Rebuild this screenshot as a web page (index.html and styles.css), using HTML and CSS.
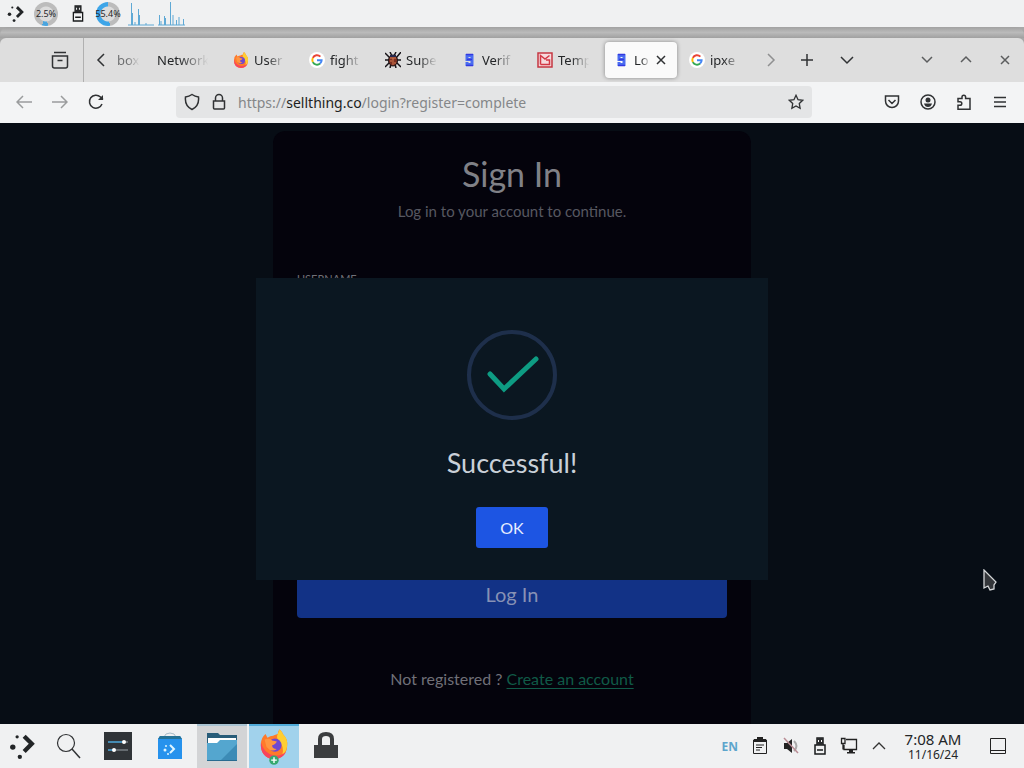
FILE: index.html
```
<!DOCTYPE html>
<html lang="en">
<head>
<meta charset="UTF-8" />
<meta name="viewport" content="width=device-width, initial-scale=1" />
<title>Sign In</title>
<link rel="stylesheet" href="styles.css">
</head>
<body>

<!-- Shared icons -->
<svg class="defs" aria-hidden="true">
  <symbol id="google" viewBox="0 0 18 18">
    <circle cx="9" cy="9" r="9" fill="#fff"/>
    <g fill="none" stroke-width="2.2">
      <path d="M12.8 5.2A5.3 5.3 0 0 0 4.3 6.6" stroke="#ea4335"/>
      <path d="M4.3 6.6a5.3 5.3 0 0 0 0 4.8" stroke="#fbbc05"/>
      <path d="M4.3 11.4a5.3 5.3 0 0 0 8.2 1.6" stroke="#34a853"/>
      <path d="M12.5 13A5.3 5.3 0 0 0 14.2 9.2H9" stroke="#4285f4"/>
    </g>
  </symbol>
  <symbol id="sell" viewBox="0 0 16 16">
    <path d="M11 6V3.500H6V7.500h5V12.500H6V10" fill="none" stroke="#4a6cf0" stroke-width="3"/>
    <path d="M5 2.500h7M5 13.500h7M6 7.500h5" stroke="#3338e0" stroke-width="1.500"/>
  </symbol>
  <symbol id="fox" viewBox="0 0 32 32">
    <path d="M2 16Q2 9 7 5l2 4q3-2 6-2 1-1 5-2 0-3 2-5 3 3 4 6 5 5 4 12a14 14 0 0 1-28 0Z" fill="#ff7a2a"/>
    <path d="M22 0q3 3 4 6 5 4 4 12-1 7-5 9 2-9-4-15-3-3-1-7Z" fill="#ffce32"/>
    <path d="M2 14q-1 17 14 18 9 0 13-8-6 5-13 4Q5 26 2 14Z" fill="#f8455d"/>
    <circle cx="17" cy="17" r="7" fill="#7048d0"/>
    <path d="M6 11q6-2 8 1l5 1q-1 3-5 4 0 4 5 4-6 4-11-2Z" fill="#ff9640"/>
  </symbol>
  <symbol id="kde" viewBox="0 0 24 24">
    <path d="m14 3 7 7-7 7" fill="none" stroke="#222527" stroke-width="4"/>
    <circle cx="7.500" cy="3.500" r="1.500" fill="#222527"/>
    <circle cx="3.500" cy="13" r="2.500" fill="#222527"/>
    <circle cx="10" cy="22" r="2" fill="#222527"/>
  </symbol>
  <symbol id="usb" viewBox="0 0 12 18">
    <path d="M3 1h6v7H3ZM1 8h10v9H1Z" fill="none" stroke="#191b1d" stroke-width="1.500"/>
    <path d="M3 1h6v7H3Z" fill="#292b2d"/>
    <path d="M4 3h1v2H4Zm3 0h1v2H7Z" fill="#fff"/>
    <path d="M3 13h6" stroke="#191b1d" stroke-width="1.500"/>
  </symbol>
</svg>

<header class="panel">
  <svg class="panel-kde" viewBox="0 0 24 24"><use href="#kde"/></svg>
  <div class="meter meter-cpu"><span>2.5%</span></div>
  <svg class="panel-usb" viewBox="0 0 12 18"><use href="#usb"/></svg>
  <div class="meter meter-mem"><span>55.4%</span></div>
  <svg class="graph" viewBox="0 0 58 25">
    <path d="M1 24h26M31 24h27M4.500 24V2M5.500 24V12M8 24v-3M11.500 24V8M12.500 24V14M19 24v-2M32.500 24V14M34 24v-4M37.500 24V15M38.500 24v-7M43.500 24V1M46 24V14M49.500 24V19M52 24V16M56.500 24V18" fill="none" stroke="#5fa9d5"/>
  </svg>
</header>

<main class="browser">
  <div class="titlebar"></div>
  <div class="tabbar">
    <button class="tool view-btn" aria-label="Firefox View">
      <svg width="18" height="18" viewBox="0 0 18 18"><path d="M3 1.500h12M1.500 5h15v10q0 2-2 2h-11q-2 0-2-2Z M6.500 9.500h5"/></svg>
    </button>
    <button class="tool scroll-btn" aria-label="Scroll left">
      <svg width="12" height="16" viewBox="0 0 12 16"><path d="m9 2-6 6 6 6"/></svg>
    </button>
    <nav class="tabs">
      <button class="tab tab-cut"><span>box</span></button>
      <button class="tab"><span>Network</span></button>
      <button class="tab"><svg class="fav" viewBox="0 0 32 32"><use href="#fox"/></svg><span>User</span></button>
      <button class="tab"><svg class="fav" viewBox="0 0 18 18"><use href="#google"/></svg><span>fight</span></button>
      <button class="tab">
        <svg class="fav" viewBox="0 0 16 16">
          <path d="m0 1 5 5M16 0l-5 6M0 15l5-5m11 5-5-5M0 8h16M5 0l2 4M11 0 9 4M5 16l1-4m5 4-1-4" stroke="#171318" stroke-width="1.500"/>
          <ellipse cx="8" cy="8.500" rx="4.500" ry="5.500" fill="#7c3022" stroke="#171318"/>
          <path d="M5 6h6M8 6v7M5 9h2m2 2h2" stroke="#d67a51"/>
          <path d="M5 4h6" stroke="#24284d" stroke-width="2"/>
        </svg><span>Supe</span></button>
      <button class="tab"><svg class="fav" viewBox="0 0 16 16"><use href="#sell"/></svg><span>Verif</span></button>
      <button class="tab">
        <svg class="fav" viewBox="0 0 16 16"><path d="M1 1h14v14H1Z" fill="#f6dadd" stroke="#c53742" stroke-width="1.500"/><path d="M3.500 12.500v-9L8 7l4.500-3.500M3.500 12.500h9V8H9" fill="none" stroke="#d33744" stroke-width="1.500"/></svg><span>Temp</span></button>
      <button class="tab active"><svg class="fav" viewBox="0 0 16 16"><use href="#sell"/></svg><span>Lo</span>
        <svg class="close" width="10" height="10" viewBox="0 0 10 10"><path d="m1 1 8 8M9 1 1 9"/></svg></button>
      <button class="tab"><svg class="fav" viewBox="0 0 18 18"><use href="#google"/></svg><span>ipxe</span></button>
    </nav>
    <button class="tool faded scroll-right" aria-label="Scroll right">
      <svg width="12" height="16" viewBox="0 0 12 16"><path d="m3 2 6 6-6 6"/></svg>
    </button>
    <button class="tool new-tab" aria-label="New tab">
      <svg width="14" height="14" viewBox="0 0 14 14"><path d="M7 1v12M1 7h12"/></svg>
    </button>
    <button class="tool new-tab" aria-label="List all tabs">
      <svg width="14" height="14" viewBox="0 0 14 14"><path d="m1 4 6 6 6-6"/></svg>
    </button>
    <div class="window-btns">
      <button class="tool" aria-label="Minimize"><svg width="12" height="12" viewBox="0 0 12 12"><path d="m1 3 5 5 5-5"/></svg></button>
      <button class="tool" aria-label="Maximize"><svg width="12" height="12" viewBox="0 0 12 12"><path d="m1 8 5-5 5 5"/></svg></button>
      <button class="tool" aria-label="Close"><svg width="10" height="10" viewBox="0 0 10 10"><path d="m1 1 8 8M9 1 1 9"/></svg></button>
    </div>
  </div>

  <div class="toolbar">
    <div class="nav-btns">
      <button class="tool faded" aria-label="Back"><svg width="16" height="16" viewBox="0 0 16 16"><path d="M7 2 1 8l6 6M1 8h15"/></svg></button>
      <button class="tool faded" aria-label="Forward"><svg width="16" height="16" viewBox="0 0 16 16"><path d="m9 2 6 6-6 6m6-6H0"/></svg></button>
      <button class="tool" aria-label="Reload"><svg width="16" height="16" viewBox="0 0 16 16"><path d="M14 10a6.500 6.500 0 1 1-1.500-7L15 5.500"/><path class="solid" d="M15 1v5h-5Z"/></svg></button>
    </div>
    <div class="urlbar">
      <svg width="16" height="18" viewBox="0 0 16 18"><path d="M8 1.500q3 2 6.500 2.500 1 9-6.500 12.500Q.500 13 1.500 4 5 3.500 8 1.500Z"/></svg>
      <svg width="14" height="18" viewBox="0 0 14 18"><path d="M3.500 8V5a3.500 3.500 0 0 1 7 0v3M1.500 8h11v7q0 1-1 1h-9q-1 0-1-1Z"/></svg>
      <div class="url">https://<b>sellthing.co</b>/login?register=complete</div>
      <button class="star" aria-label="Bookmark"><svg width="16" height="16" viewBox="0 0 18 18"><path d="m9 1.500 2.300 4.900 5.200.7-3.800 3.700.9 5.300L9 13.500l-4.600 2.600.9-5.300-3.800-3.700 5.200-.7Z"/></svg></button>
    </div>
    <div class="actions">
      <button class="tool" aria-label="Pocket"><svg width="16" height="16" viewBox="0 0 16 16"><path d="M1.500 2h13v5a6.500 6.500 0 0 1-13 0ZM4.500 6 8 9.500 11.500 6"/></svg></button>
      <button class="tool" aria-label="Account"><svg width="16" height="16" viewBox="0 0 16 16"><circle cx="8" cy="8" r="7"/><circle class="solid" cx="8" cy="6" r="2.500"/><path class="solid" d="M4 9.500h8q-1 3.500-4 3.500T4 9.500Z"/></svg></button>
      <button class="tool" aria-label="Extensions"><svg width="16" height="16" viewBox="0 0 16 16"><path d="M2 4.500h4V3a1.800 1.800 0 0 1 3.600 0v1.500H14v10.800H2v-4h2a1.800 1.800 0 0 0 0-3.600H2Z"/></svg></button>
      <button class="tool" aria-label="Menu"><svg width="14" height="14" viewBox="0 0 14 14"><path d="M1 2.500h12M1 7h12M1 11.500h12"/></svg></button>
    </div>
  </div>

  <section class="page">
    <form class="card">
      <h1>Sign In</h1>
      <p class="lead">Log in to your account to continue.</p>
      <label for="username">USERNAME</label>
      <input type="text" id="username" />
      <input type="password" id="password" aria-label="Password" />
      <button type="button" class="login-btn">Log In</button>
      <p class="register">Not registered ? <a href="#">Create an account</a></p>
    </form>

    <!-- Success popup -->
    <div class="overlay">
      <div class="modal" role="dialog" aria-labelledby="modalTitle">
        <svg class="check" viewBox="0 0 90 90">
          <circle cx="45" cy="45" r="43" fill="none" stroke="#1e2f4b" stroke-width="4"/>
          <path d="m23 44 14 15 32-30" fill="none" stroke="#0e9c83" stroke-width="5" stroke-linecap="round"/>
        </svg>
        <h2 id="modalTitle">Successful!</h2>
        <button type="button" class="ok-btn">OK</button>
      </div>
    </div>
  </section>
</main>

<footer class="taskbar">
  <div class="launchers">
    <button class="task" aria-label="Menu"><svg width="26" height="26" viewBox="0 0 24 24"><use href="#kde"/></svg></button>
    <button class="task search" aria-label="Search"><svg width="28" height="28" viewBox="0 0 28 28"><circle cx="12" cy="11" r="8.500" fill="none" stroke="#303234" stroke-width="1.200"/><path d="m18 17 8 9" stroke="#303234" stroke-width="1.500"/></svg></button>
    <button class="task" aria-label="Settings"><svg width="28" height="28" viewBox="0 0 28 28"><path d="M0 0h28v28H0Z" fill="#303438"/><path d="M4 10h14M4 18h6" stroke="#4ca8da" stroke-width="1.500"/><path d="M18 10h6M10 18h14" stroke="#777d82" stroke-width="1.500"/><circle cx="20" cy="10" r="2" fill="#fff"/><circle cx="10" cy="18" r="2" fill="#fff"/></svg></button>
    <button class="task" aria-label="Discover"><svg width="28" height="28" viewBox="0 0 28 28"><path d="M8 5q1-4 6-4t6 4" fill="none" stroke="#a8bcc8"/><path d="M4 4h20l2 3v20H2V7Z" fill="#2692ed"/><path d="M4 4h20l2 3H2Z" fill="#267396"/><path d="m14 13 4 4-4 4" fill="none" stroke="#dff5ff" stroke-width="2"/><circle cx="10" cy="14" r="1" fill="#dff5ff"/><circle cx="9" cy="18" r="1.500" fill="#dff5ff"/><circle cx="12" cy="22" r="1" fill="#dff5ff"/></svg></button>
    <button class="task open" aria-label="Files"><svg width="32" height="30" viewBox="0 0 32 30"><path d="M1 1h11l2 2h17v12H1Z" fill="#285c79"/><path d="M2 6h28v8H2Z" fill="#fff"/><path d="M1 11h10l3-3h17v21H1Z" fill="#54a6cf"/><path d="m14 29 17-17v17Z" fill="#3c8bb6"/><path d="M1 28.500h30" stroke="#286b90"/></svg></button>
    <button class="task current" aria-label="Firefox"><svg width="30" height="38" viewBox="0 0 32 38"><use href="#fox" width="32" height="32"/><circle cx="16" cy="33" r="5" fill="#35a86e"/><path d="M16 30v6m-3-3h6" stroke="#fff" stroke-width="1.500"/></svg></button>
    <button class="task" aria-label="Lock"><svg width="26" height="28" viewBox="0 0 26 28"><path d="M7 14V7q0-5 6-5t6 5v7" fill="none" stroke="#3b3d3f" stroke-width="4"/><path d="M1 13h24v13H1Z" fill="#3b3d3f"/></svg></button>
  </div>
  <div class="tray">
    <span class="lang">EN</span>
    <svg width="16" height="18" viewBox="0 0 16 18"><path d="M1.500 3h13v13.500h-13Z" fill="none" stroke="#222"/><path d="M2 2h3V0h6v2h3v3H2Z" fill="#222"/><path d="M4 8h8M4 10.500h6M4 13h4" stroke="#222"/></svg>
    <svg width="18" height="18" viewBox="0 0 18 18"><path d="M2 6h3l5-4v14l-5-4H2Z" fill="#222"/><path d="M12 4q5 5 0 10" fill="none" stroke="#aaa" stroke-width="2"/><path d="m2 1 14 15" stroke="#b88b93" stroke-width="1.500"/></svg>
    <svg width="12" height="18" viewBox="0 0 12 18"><use href="#usb"/></svg>
    <svg width="18" height="18" viewBox="0 0 18 18"><path d="M6 2.500h10.500v10H4V8M1.500 1.500H5v5H1.500ZM3 7v5.500" fill="none" stroke="#222" stroke-width="1.300"/><path d="M9 13h4v2h2v1.500H7V15h2Z" fill="#222"/></svg>
    <svg width="14" height="14" viewBox="0 0 14 14"><path d="m1 10 6-6 6 6" fill="none" stroke="#333" stroke-width="1.300"/></svg>
  </div>
  <div class="clock"><time>7:08 AM</time><small>11/16/24</small></div>
  <button class="desktop-btn" aria-label="Show desktop"><svg width="16" height="16" viewBox="0 0 16 16"><path d="M.500.500h15v15H.500ZM1 12.500h14" fill="none" stroke="#222"/></svg></button>
</footer>

<svg class="cursor" viewBox="0 0 14 22"><path d="M1 1v18l4-2 2 4 4-1V16l2-3Z" fill="#34363a" stroke="#d4d6d8" stroke-width="1.300"/></svg>

</body>
</html>
```

FILE: styles.css
```
* {
  box-sizing: border-box;
}

body {
  margin: 0;
  height: 100vh;
  display: flex;
  flex-direction: column;
  overflow: hidden;
  background: #a8a8a8;
  font-family: "Noto Sans", sans-serif;
  color: #242628;
}

button {
  padding: 0;
  border: none;
  background: none;
  color: inherit;
  font: inherit;
}

svg {
  display: block;
  flex: none;
}

.defs {
  position: absolute;
  width: 0;
  height: 0;
}

/* Top panel */
.panel {
  display: flex;
  align-items: center;
  height: 27px;
  padding-left: 7px;
  background: #f0f1f2;
}

.panel-kde {
  width: 17px;
  height: 17px;
}

.panel-usb {
  width: 12px;
  height: 17px;
  margin: 0 12px 0 14px;
}

.meter {
  display: flex;
  align-items: center;
  justify-content: center;
  width: 24px;
  height: 24px;
  border-radius: 50%;
  font-size: 9px;
  white-space: nowrap;
}

.meter-cpu {
  margin-left: 10px;
  background: radial-gradient(#dcdcdc 7px, transparent 8px), conic-gradient(#bcbcbc 170deg, #4aa5df 170deg 200deg, #bcbcbc 200deg);
}

.meter-mem {
  background: radial-gradient(#dcdcdc 7px, transparent 8px), conic-gradient(#bcbcbc 170deg, #3da5e8 170deg);
}

.graph {
  width: 58px;
  height: 25px;
  margin-left: 7px;
}

/* Browser window */
.browser {
  display: flex;
  flex: 1;
  flex-direction: column;
  min-height: 0;
}

.titlebar {
  height: 11px;
  border-radius: 8px 8px 0 0;
  background: linear-gradient(#a2a2a2, #bababa 50%, #a0a0a0);
}

.tabbar {
  display: flex;
  align-items: center;
  height: 44px;
  border-radius: 6px 6px 0 0;
  background: #dedede;
  font-size: 13px;
}

.tool {
  display: grid;
  place-items: center;
  width: 36px;
  height: 32px;
}

.tool svg,
.close,
.urlbar svg {
  fill: none;
  stroke: #303234;
  stroke-width: 1.5;
}

.tool .solid {
  fill: #303234;
  stroke: none;
}

.faded {
  opacity: 0.45;
}

.view-btn {
  width: 84px;
  height: 44px;
  padding-left: 36px;
  border-right: 1px solid #b0b0b0;
}

.scroll-btn {
  width: 33px;
}

.scroll-right {
  width: 32px;
}

.tabs {
  display: flex;
}

.tab {
  display: flex;
  align-items: center;
  gap: 5px;
  width: 72px;
  height: 36px;
  margin: 0 2px;
  padding: 0 10px 0 8px;
  border-radius: 4px;
}

.tab span {
  flex: 1;
  min-width: 0;
  overflow: hidden;
  text-align: left;
  white-space: nowrap;
  mask-image: linear-gradient(to right, #000 40%, transparent 95%);
}

.tab-cut {
  width: 30px;
  margin: 0;
  padding: 0 6px 0 0;
  opacity: 0.6;
}

.fav {
  width: 16px;
  height: 16px;
}

.active {
  padding-right: 11px;
  background: #fafafa;
  box-shadow: 0 0 4px rgba(0, 0, 0, 0.4);
}

.new-tab {
  width: 40px;
}

.window-btns {
  display: flex;
  gap: 3px;
  margin-left: auto;
  padding-right: 1px;
  opacity: 0.75;
}

/* Address row */
.toolbar {
  display: flex;
  align-items: center;
  height: 41px;
  padding-bottom: 1px;
  background: #f3f4f5;
}

.nav-btns {
  display: flex;
  width: 176px;
  padding-left: 6px;
}

.urlbar {
  display: flex;
  flex: 1;
  align-items: center;
  gap: 12px;
  height: 32px;
  margin-right: 62px;
  padding: 0 8px;
  border-radius: 4px;
  background: #e4e5e6;
}

.url {
  flex: 1;
  font-size: 14px;
  color: #858789;
}

.url b {
  font-weight: normal;
  color: #1d1f21;
}

.actions {
  display: flex;
  padding-right: 6px;
}

/* Web page */
.page {
  position: relative;
  flex: 1;
  min-height: 0;
  overflow: hidden;
  padding-top: 8px;
  background: #070d15;
  font-family: Lato, sans-serif;
}

.card {
  display: flex;
  flex-direction: column;
  width: 478px;
  max-width: 100%;
  min-height: 620px;
  margin: 0 auto;
  padding: 24px;
  border-radius: 12px;
  background: #04030c;
  color: #707078;
  text-align: center;
}

.card h1 {
  margin: 0;
  font-size: 34px;
  font-weight: normal;
  line-height: 38px;
  color: #808187;
}

.lead {
  margin: 8px 0 50px;
  font-size: 15px;
  line-height: 20px;
  color: #575861;
}

.card label {
  margin-bottom: 8px;
  font-size: 11px;
  line-height: 16px;
  text-align: left;
}

.card input {
  height: 44px;
  margin-bottom: 48px;
  border: 1px solid #182033;
  border-radius: 4px;
  background: #070d15;
}

.login-btn {
  height: 48px;
  margin-top: 91px;
  border-radius: 4px;
  background: #123286;
  font-size: 20px;
  color: #8791b5;
}

.register {
  margin: 50px 0 0;
  font-size: 16px;
  line-height: 22px;
}

.register a {
  color: #105a47;
  text-underline-offset: 3px;
}

/* Popup */
.overlay {
  position: absolute;
  inset: 0;
  display: flex;
  justify-content: center;
  align-items: center;
  padding-top: 10px;
}

.modal {
  display: flex;
  flex-direction: column;
  align-items: center;
  width: 50%;
  padding: 52px 24px 32px;
  background: #0b1721;
}

.check {
  width: 90px;
  height: 90px;
}

.modal h2 {
  margin: 27px 0 28px;
  font-size: 27px;
  font-weight: normal;
  line-height: 32px;
  color: #c9d0d8;
}

.ok-btn {
  width: 72px;
  height: 41px;
  border-radius: 3px;
  background: #1d55e3;
  font-size: 16px;
  color: #e6edff;
}

/* Bottom taskbar */
.taskbar {
  display: flex;
  align-items: center;
  height: 44px;
  background: #f0f1f2;
}

.launchers {
  display: flex;
  flex: 1;
  gap: 2px;
  padding-left: 2px;
}

.task {
  display: grid;
  place-items: center;
  width: 50px;
  height: 44px;
}

.task:first-child {
  width: 40px;
}

.search {
  width: 47px;
}

.open {
  border-top: 2px solid #a9c3d2;
  background: #d3d4d6;
}

.current {
  border-top: 2px solid #50abd9;
  background: #a1d2ec;
}

.tray {
  display: flex;
  align-items: center;
  gap: 14px;
}

.lang {
  font-size: 12px;
  font-weight: bold;
  color: #5da5cc;
}

.clock {
  display: flex;
  flex-direction: column;
  align-items: center;
  width: 94px;
  font-size: 15px;
  line-height: 18px;
}

.clock small {
  font-size: 12px;
  line-height: 14px;
}

.desktop-btn {
  display: grid;
  place-items: center;
  width: 36px;
  margin-right: 8px;
}

/* Mouse pointer */
.cursor {
  position: absolute;
  left: 983px;
  top: 569px;
  width: 14px;
  height: 22px;
}
```
